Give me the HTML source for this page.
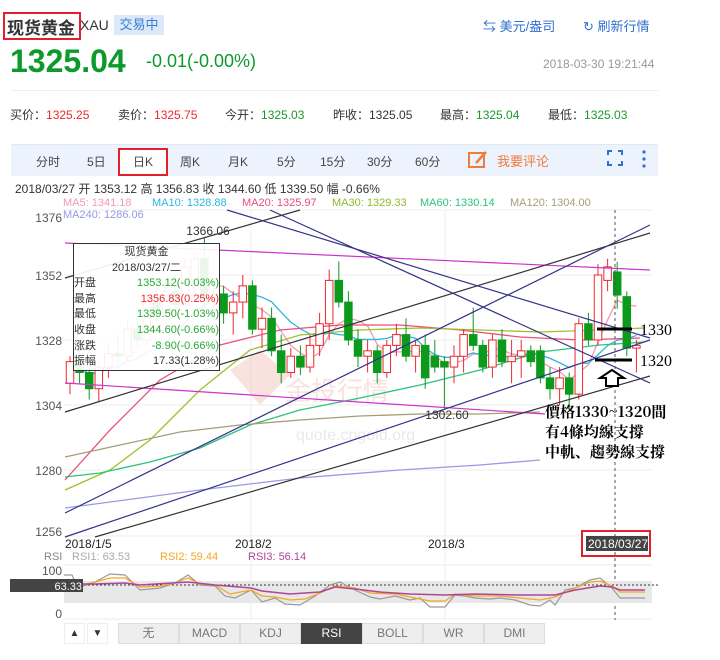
<!DOCTYPE html>
<html><head><meta charset="utf-8"><style>
body{margin:0;width:720px;height:660px;background:#fff;font-family:"Liberation Sans","Noto Sans CJK SC",sans-serif;position:relative;overflow:hidden;color:#333}
.a{position:absolute;white-space:nowrap}
</style></head><body>
<div class="a" style="left:3px;top:12px;width:74px;height:24px;border:2px solid #e0202a"></div>
<div class="a" style="left:7px;top:14px;font-size:17px;font-weight:bold;color:#333">现货黄金</div>
<div class="a" style="left:80px;top:17px;font-size:14px;color:#333">XAU</div>
<div class="a" style="left:114px;top:15px;width:50px;height:20px;background:#dbe9f9;color:#3a7fd5;font-size:13px;text-align:center;line-height:20px">交易中</div>
<div class="a" style="left:483px;top:16px;font-size:13px;color:#2f6fd0">⇆ 美元/盎司</div>
<div class="a" style="left:583px;top:16px;font-size:13px;color:#2f6fd0">↻ 刷新行情</div>
<div class="a" style="left:10px;top:43px;font-size:32px;font-weight:bold;color:#0c9a2c">1325.04</div>
<div class="a" style="left:146px;top:51px;font-size:18px;color:#0c9a2c">-0.01(-0.00%)</div>
<div class="a" style="left:543px;top:57px;font-size:12px;color:#999">2018-03-30 19:21:44</div>
<div class="a" style="left:11px;top:90px;width:647px;height:1px;background:#eee"></div>
<div class="a" style="left:10px;top:106px;font-size:12px;color:#333">买价：<span style="color:#f0262b">1325.25</span></div>
<div class="a" style="left:118px;top:106px;font-size:12px;color:#333">卖价：<span style="color:#f0262b">1325.75</span></div>
<div class="a" style="left:225px;top:106px;font-size:12px;color:#333">今开：<span style="color:#1a9a2a">1325.03</span></div>
<div class="a" style="left:333px;top:106px;font-size:12px;color:#333">昨收：1325.05</div>
<div class="a" style="left:440px;top:106px;font-size:12px;color:#333">最高：<span style="color:#1a9a2a">1325.04</span></div>
<div class="a" style="left:548px;top:106px;font-size:12px;color:#333">最低：<span style="color:#1a9a2a">1325.03</span></div>
<div class="a" style="left:11px;top:144px;width:647px;height:31px;background:#edf3fc;border-top:1px solid #dfe8f5"></div>
<div class="a" style="top:153px;left:36px;font-size:12px;color:#444">分时</div>
<div class="a" style="top:153px;left:87px;font-size:12px;color:#444">5日</div>
<div class="a" style="left:118px;top:148px;width:46px;height:24px;border:2px solid #e0202a;background:#fff"></div>
<div class="a" style="top:153px;left:133px;font-size:12px;color:#444">日K</div>
<div class="a" style="top:153px;left:180px;font-size:12px;color:#444">周K</div>
<div class="a" style="top:153px;left:228px;font-size:12px;color:#444">月K</div>
<div class="a" style="top:153px;left:277px;font-size:12px;color:#444">5分</div>
<div class="a" style="top:153px;left:320px;font-size:12px;color:#444">15分</div>
<div class="a" style="top:153px;left:367px;font-size:12px;color:#444">30分</div>
<div class="a" style="top:153px;left:415px;font-size:12px;color:#444">60分</div>
<svg class="a" style="left:467px;top:150px" width="22" height="20"><rect x="2" y="3" width="15" height="14" fill="none" stroke="#f07b3f" stroke-width="2"/><path d="M9 13 L19 2" stroke="#f07b3f" stroke-width="2.5"/></svg>
<div class="a" style="top:151px;left:497px;font-size:13px;color:#f07b3f">我要评论</div>
<svg class="a" style="left:607px;top:150px" width="16" height="16"><path d="M1 5V1H5M11 1H15V5M15 11V15H11M5 15H1V11" fill="none" stroke="#2f6fd0" stroke-width="2"/></svg>
<svg class="a" style="left:641px;top:150px" width="6" height="18"><circle cx="3" cy="2" r="1.6" fill="#2f6fd0"/><circle cx="3" cy="9" r="1.6" fill="#2f6fd0"/><circle cx="3" cy="16" r="1.6" fill="#2f6fd0"/></svg>
<div class="a" style="left:15px;top:180px;font-size:12px;color:#333">2018/03/27 开 1353.12 高 1356.83 收 1344.60 低 1339.50 幅 -0.66%</div>
<div class="a" style="left:63px;top:197px;font-size:11px;color:#f59ab4">MA5: 1341.18</div>
<div class="a" style="left:152px;top:197px;font-size:11px;color:#2cb6e0">MA10: 1328.88</div>
<div class="a" style="left:242px;top:197px;font-size:11px;color:#e8507a">MA20: 1325.97</div>
<div class="a" style="left:332px;top:197px;font-size:11px;color:#8fba2a">MA30: 1329.33</div>
<div class="a" style="left:420px;top:197px;font-size:11px;color:#2ec27e">MA60: 1330.14</div>
<div class="a" style="left:510px;top:197px;font-size:11px;color:#a89c76">MA120: 1304.00</div>
<div class="a" style="left:63px;top:209px;font-size:11px;color:#9999e6">MA240: 1286.06</div>

<svg id="ch" class="a" style="left:0;top:0" width="720" height="660" font-family="Liberation Sans, sans-serif">
<g stroke="#eee" stroke-width="1">
<line x1="64" y1="210" x2="652" y2="210"/><line x1="64" y1="275" x2="652" y2="275"/><line x1="64" y1="340" x2="652" y2="340"/><line x1="64" y1="405" x2="652" y2="405"/><line x1="64" y1="470" x2="652" y2="470"/><line x1="64" y1="536" x2="652" y2="536"/>
<line x1="251" y1="210" x2="251" y2="620"/><line x1="445" y1="210" x2="445" y2="620"/>
<line x1="64" y1="565" x2="652" y2="565"/><line x1="64" y1="619" x2="652" y2="619"/>
</g>
<g font-size="12" fill="#555" text-anchor="end"><text x="62" y="222">1376</text><text x="62" y="280">1352</text><text x="62" y="345">1328</text><text x="62" y="410">1304</text><text x="62" y="475">1280</text><text x="62" y="536">1256</text></g>
<g opacity="0.25"><path d="M230 370 L260 350 L290 375 L260 405 Z" fill="#e8907a"/><text x="285" y="400" font-size="26" fill="#e8907a" font-family="Noto Sans CJK SC">金投行情</text><text x="296" y="440" font-size="16" fill="#aaa">quote.cngold.org</text></g>
<g id="ma"></g>
<g id="cd"></g>
<g fill="none" stroke-width="1.2">
<line x1="65" y1="243" x2="650" y2="270" stroke="#cc33cc"/>
<line x1="65" y1="383" x2="545" y2="414" stroke="#cc33cc"/>
<line x1="65" y1="412" x2="650" y2="233" stroke="#333"/>
<line x1="65" y1="278" x2="300" y2="210" stroke="#333"/>
<line x1="95" y1="537" x2="650" y2="376" stroke="#333"/>
<line x1="65" y1="513" x2="650" y2="225" stroke="#33338a"/>
<line x1="65" y1="537" x2="650" y2="340" stroke="#33338a"/>
<line x1="227" y1="210" x2="650" y2="338" stroke="#33338a"/>
<line x1="270" y1="210" x2="650" y2="383" stroke="#33338a"/>
</g>
<line x1="615" y1="210" x2="615" y2="620" stroke="#555" stroke-dasharray="3,3"/>
<text x="208" y="235" font-size="12" fill="#333" text-anchor="middle">1366.06</text>
<text x="447" y="419" font-size="12" fill="#333" text-anchor="middle">1302.60</text>
<path d="M597 329H632M595 360H632" stroke="#000" stroke-width="3"/>
<text x="640" y="335" font-size="16" font-family="Liberation Serif" fill="#000">1330</text>
<text x="640" y="366" font-size="16" font-family="Liberation Serif" fill="#000">1320</text>
<path d="M604 372 L612 372 L612 366 L620 378 L612 390 L612 384 L604 384 Z" transform="rotate(-90 612 378)" fill="#fff" stroke="#000" stroke-width="2"/>
<g font-size="15" font-weight="bold" font-family="Noto Serif CJK SC, serif" fill="#000"><text x="545" y="417">價格1330~1320間</text><text x="545" y="437">有4條均線支撐</text><text x="545" y="457">中軌、趨勢線支撐</text></g>
<g font-size="12" fill="#222"><text x="65" y="548">2018/1/5</text><text x="235" y="548">2018/2</text><text x="428" y="548">2018/3</text></g>
<rect x="582" y="531" width="68" height="25" fill="none" stroke="#e0202a" stroke-width="2"/>
<rect x="586" y="536" width="62" height="15" fill="#444"/><text x="588" y="548" font-size="12" fill="#fff">2018/03/27</text>
<g font-size="11"><text x="44" y="560" fill="#888">RSI</text><text x="72" y="560" fill="#aaa">RSI1: 63.53</text><text x="160" y="560" fill="#f5a623">RSI2: 59.44</text><text x="248" y="560" fill="#b0449a">RSI3: 56.14</text></g>
<rect x="64" y="581" width="588" height="22" fill="#e8e8e8"/>
<g font-size="12" fill="#555" text-anchor="end"><text x="62" y="575">100</text><text x="62" y="618">0</text></g>
<line x1="60" y1="585" x2="660" y2="585" stroke="#333" stroke-dasharray="2,2"/>
<polyline fill="none" stroke="#999" stroke-width="1.2" points="64,575 72,575 78,588 95,582 110,574 125,575 140,590 160,588 175,583 188,575 200,585 215,586 225,596 235,598 251,590 262,602 275,598 285,604 300,605 315,596 330,585 340,582 355,590 370,597 380,599 395,596 410,600 420,598 430,607 445,607 455,595 465,596 475,598 490,599 500,598 515,600 530,605 540,606 550,600 555,605 565,590 575,588 590,580 600,578 612,588 620,598 645,598"/>
<polyline fill="none" stroke="#f5a623" stroke-width="1.3" points="64,580 78,586 95,582 110,578 125,578 140,587 160,586 175,583 188,578 200,584 215,585 230,594 251,590 262,596 275,597 290,600 305,599 320,593 335,586 355,588 370,593 395,594 410,597 430,601 445,601 455,594 475,596 500,596 520,598 540,600 555,597 575,588 590,582 600,581 612,586 620,592 645,592"/>
<polyline fill="none" stroke="#b0449a" stroke-width="1.5" points="64,584 95,584 125,583 140,585 188,582 215,585 251,588 262,591 290,594 320,592 335,587 355,589 380,592 410,594 445,595 475,594 520,595 555,595 575,590 600,586 612,587 620,590 645,590"/>
<rect x="10" y="579" width="73" height="13" fill="#444"/><text x="82" y="590" font-size="11" fill="#fff" text-anchor="end">63.33</text>
</svg>
<div id="tt" class="a" style="left:73px;top:243px;width:147px;height:128px;background:rgba(255,255,255,0.92);border:1px solid #333;font-size:11px;line-height:15.6px;color:#333;padding-top:1px;box-sizing:border-box">
<div style="text-align:center">现货黄金</div><div style="text-align:center">2018/03/27/二</div>
<div>开盘<span style="float:right;color:#2aa83a">1353.12(-0.03%)</span></div>
<div>最高<span style="float:right;color:#f0262b">1356.83(0.25%)</span></div>
<div>最低<span style="float:right;color:#2aa83a">1339.50(-1.03%)</span></div>
<div>收盘<span style="float:right;color:#2aa83a">1344.60(-0.66%)</span></div>
<div>涨跌<span style="float:right;color:#2aa83a">-8.90(-0.66%)</span></div>
<div>振幅<span style="float:right;color:#333">17.33(1.28%)</span></div>
</div>
<div class="a" style="left:64px;top:623px;width:19px;height:19px;border:1px solid #eee;font-size:10px;text-align:center;line-height:19px">▲</div>
<div class="a" style="left:87px;top:623px;width:19px;height:19px;border:1px solid #eee;font-size:10px;text-align:center;line-height:19px">▼</div>
<div class="a" style="left:118px;top:623px;display:flex;font-size:12px;color:#777">
<div style="width:59px;height:19px;line-height:19px;text-align:center;background:#eee;border:1px solid #ddd">无</div>
<div style="width:59px;height:19px;line-height:19px;text-align:center;background:#eee;border:1px solid #ddd">MACD</div>
<div style="width:59px;height:19px;line-height:19px;text-align:center;background:#eee;border:1px solid #ddd">KDJ</div>
<div style="width:59px;height:19px;line-height:19px;text-align:center;background:#444;color:#fff;border:1px solid #444">RSI</div>
<div style="width:59px;height:19px;line-height:19px;text-align:center;background:#eee;border:1px solid #ddd">BOLL</div>
<div style="width:59px;height:19px;line-height:19px;text-align:center;background:#eee;border:1px solid #ddd">WR</div>
<div style="width:59px;height:19px;line-height:19px;text-align:center;background:#eee;border:1px solid #ddd">DMI</div>
</div>
<script>
var D=[[1312,1322,1308,1320],[1320,1325,1312,1316],[1316,1318,1306,1310],[1310,1320,1305,1318],[1318,1326,1314,1323],[1323,1330,1318,1322],[1322,1335,1320,1332],[1332,1340,1326,1328],[1328,1345,1326,1342],[1342,1348,1335,1338],[1338,1350,1334,1346],[1346,1352,1338,1341],[1341,1358,1340,1355],[1348,1360,1345,1358],[1358,1366.06,1340,1343],[1343,1350,1335,1345],[1345,1348,1334,1338],[1338,1346,1330,1342],[1342,1352,1336,1348],[1348,1350,1330,1332],[1332,1340,1325,1336],[1336,1340,1322,1324],[1324,1330,1312,1316],[1316,1325,1314,1322],[1322,1326,1315,1318],[1318,1330,1316,1326],[1326,1338,1322,1334],[1334,1354,1328,1350],[1350,1357,1340,1342],[1342,1346,1326,1328],[1328,1332,1318,1322],[1322,1328,1316,1324],[1324,1326,1312,1316],[1316,1328,1314,1326],[1326,1334,1322,1330],[1330,1336,1320,1322],[1322,1328,1316,1326],[1326,1330,1310,1314],[1322,1328,1316,1318],[1320,1322,1302.6,1318],[1318,1326,1312,1322],[1322,1332,1316,1330],[1330,1340,1324,1326],[1326,1328,1316,1318],[1318,1330,1314,1328],[1328,1332,1318,1320],[1320,1328,1312,1322],[1322,1328,1314,1324],[1324,1326,1318,1320],[1324,1326,1312,1314],[1314,1318,1306,1310],[1310,1318,1304,1314],[1314,1316,1302,1308],[1308,1336,1306,1334],[1334,1338,1326,1328],[1328,1356,1326,1352],[1350,1358,1346,1355],[1353.12,1356.83,1339.5,1344.6],[1344,1346,1322,1325],[1325,1328,1316,1326]];
function Y(p){return 210+(1376-p)*2.708}
var s="";
D.forEach(function(d,i){var x=70+i*9.6,up=d[3]>=d[0],c=up?"#f0262b":"#0c9a1c",t=Y(Math.max(d[0],d[3])),b=Y(Math.min(d[0],d[3]));
s+='<line x1="'+x+'" x2="'+x+'" y1="'+Y(d[1])+'" y2="'+Y(d[2])+'" stroke="'+c+'"/>';
s+='<rect x="'+(x-3.75)+'" y="'+t+'" width="7.5" height="'+Math.max(1,b-t)+'" fill="'+(up?'#fff':c)+'" stroke="'+c+'"/>';});
document.getElementById("cd").innerHTML=s;
function ma(n){var p=[];D.forEach(function(d,i){var sum=0,k=0;for(var j=Math.max(0,i-n+1);j<=i;j++){sum+=D[j][3];k++}p.push((70+i*9.6)+","+Y(sum/k))});return p.join(" ")}
var m='';
m+='<polyline fill="none" stroke="#f59ab4" stroke-width="1.3" points="'+ma(5)+'"/>';
m+='<polyline fill="none" stroke="#2cb6e0" stroke-width="1.3" points="'+ma(10)+'"/>';
m+='<polyline fill="none" stroke="#e8507a" stroke-width="1.3" points="65,480 110,430 160,380 220,345 280,330 340,325 400,325 460,330 520,337 580,340 640,338"/>';
m+='<polyline fill="none" stroke="#9fc12f" stroke-width="1.3" points="65,490 110,470 150,440 200,390 250,350 300,335 360,330 420,328 480,330 540,332 600,330 645,328"/>';
m+='<polyline fill="none" stroke="#2ec27e" stroke-width="1.3" points="65,477 100,473 150,462 200,448 250,425 300,410 360,398 420,385 480,370 540,352 600,345 645,342"/>';
m+='<polyline fill="none" stroke="#a89c76" stroke-width="1.3" points="65,457 120,445 180,432 240,425 300,420 360,416 420,414 480,414 540,412"/>';
m+='<polyline fill="none" stroke="#9999e6" stroke-width="1.3" points="65,508 200,490 300,478 400,470 480,465 540,460"/>';
document.getElementById("ma").innerHTML=m;
</script>
</body></html>
